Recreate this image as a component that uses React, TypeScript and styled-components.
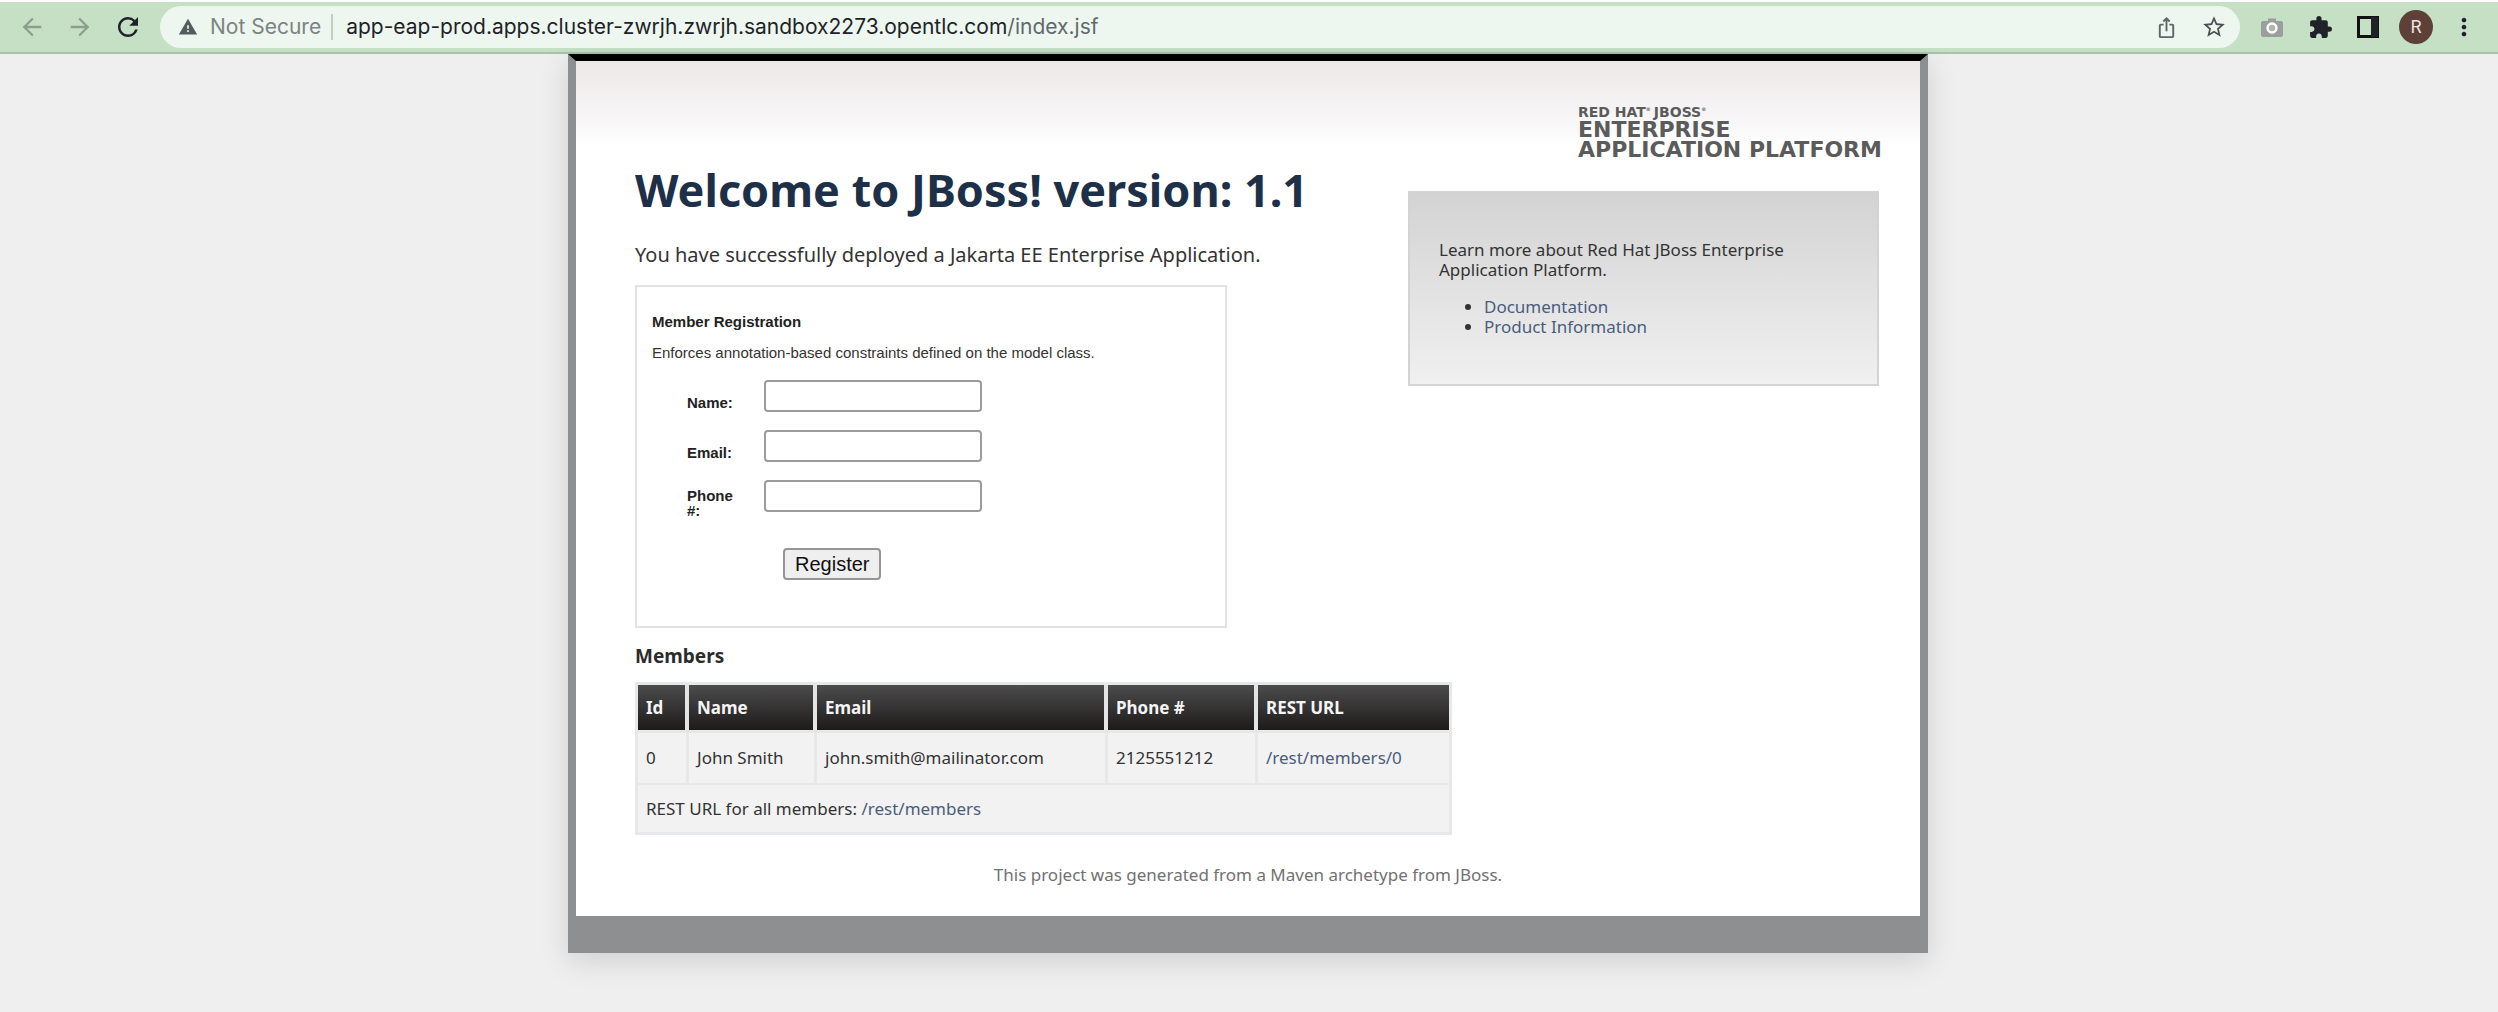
import React from 'react';
import styled, { createGlobalStyle } from 'styled-components';
import {
  MdArrowBack,
  MdArrowForward,
  MdExtension,
  MdIosShare,
  MdMoreVert,
  MdRefresh,
  MdStarBorder,
  MdWarning,
} from 'react-icons/md';

const pageFont = '"Noto Sans", "Open Sans", sans-serif';
const formFont = '"Liberation Sans", Arial, sans-serif';

const GlobalStyle = createGlobalStyle`
  * { box-sizing: border-box; }
  html { background: #efefef; }
  body { margin: 0; font-family: ${pageFont}; color: #333; }
  h1, h2, h3, p, ul { margin: 0; }
`;

/* ---------- browser toolbar ---------- */

const Toolbar = styled.header`
  display: flex;
  align-items: center;
  height: 54px;
  padding: 0 10px 0 8px;
  border-top: 2px solid #fdfefd;
  border-bottom: 2px solid #a9c3ab;
  background: #c6e0c6;
`;

const ToolGroup = styled.div`
  display: flex;
  align-items: center;
`;

const IconButton = styled.button<{ $tone: string }>`
  display: flex;
  justify-content: center;
  width: 48px;
  padding: 0;
  border: 0;
  background: none;
  color: ${({ $tone }) => $tone};
`;

const AddressBar = styled.div`
  flex: 1;
  display: flex;
  align-items: center;
  height: 42px;
  margin: 0 8px;
  padding: 0 2px 0 18px;
  border-radius: 21px;
  background: #edf7ef;
  font: 21px/28px Inter, Roboto, sans-serif;
  color: #1f2329;
`;

const Security = styled.span`
  display: flex;
  align-items: center;
  gap: 12px;
  padding-right: 10px;
  border-right: 2px solid #c3cdc5;
  margin-right: 13px;
  line-height: 26px;
  color: #7c8385;
`;

const Url = styled.span`
  flex: 1;
`;

const UrlPath = styled.span`
  color: #62696c;
`;

const Avatar = styled.button`
  width: 34px;
  height: 34px;
  margin: 0 7px;
  padding: 0;
  border: 0;
  border-radius: 50%;
  background: #5d4037;
  color: #eee3df;
  font: 18px/34px Roboto, sans-serif;
`;

const CameraIcon = () => (
  <svg width="22" height="20" viewBox="0 0 22 20" fill="#9a9e9c" aria-hidden="true">
    <path d="M2 4h5V1.500h8V4h5a2 2 0 0 1 2 2v12a2 2 0 0 1-2 2H2a2 2 0 0 1-2-2V6a2 2 0 0 1 2-2z" />
    <circle cx="11" cy="11" r="4.500" fill="#b1b4b2" stroke="#fff" strokeWidth="2.400" />
  </svg>
);

const PanelIcon = () => (
  <svg width="22" height="22" viewBox="0 0 22 22" aria-hidden="true">
    <path d="M1.500 1.500h19v19h-19z" fill="none" stroke="#111" strokeWidth="3" />
    <path d="M14 1h7v20h-7z" fill="#1f2329" />
  </svg>
);

/* ---------- page ---------- */

const Page = styled.main`
  padding: 0 2px 58px 0;
`;

const Container = styled.div`
  max-width: 1360px;
  margin: 0 auto;
  border: 8px solid #8d8f91;
  border-top: 7px solid #000;
  border-bottom-width: 37px;
  background: #fff linear-gradient(#ece8e7, #f6f4f5 50px, #fff 86px) no-repeat;
  box-shadow: 0 8px 28px rgba(0, 0, 0, 0.13);
`;

const Content = styled.div`
  padding: 43px 41px 29px 59px;
`;

const TopRow = styled.div`
  display: flex;
  justify-content: space-between;
  align-items: flex-start;
`;

const Intro = styled.section`
  padding-top: 56px;
`;

const Title = styled.h1`
  font-size: 45px;
  line-height: 60px;
  font-weight: 700;
  color: #1d3048;
`;

const Lead = styled.p`
  margin: 21px 0 16px;
  font-size: 20px;
  line-height: 28px;
`;

/* ---------- registration form ---------- */

const FormCard = styled.form`
  width: 592px;
  padding: 25px 15px 46px;
  border: 2px solid #e2e2e2;
  font: 15px/20px ${formFont};
`;

const FormTitle = styled.h2`
  font-size: 15px;
  line-height: 20px;
  color: #222;
`;

const FormNote = styled.p`
  margin: 11px 0 17px;
`;

const Fields = styled.div`
  display: grid;
  grid-template-columns: 50px 218px;
  grid-auto-rows: 32px;
  align-items: center;
  gap: 18px 27px;
  padding-left: 35px;
`;

const Label = styled.label`
  padding-top: 13px;
  font-weight: 700;
  line-height: 15px;
  color: #222;
`;

const TextInput = styled.input`
  width: 100%;
  height: 32px;
  padding: 2px 6px;
  border: 2px solid #9c9c9c;
  border-radius: 4px;
  background: #fff;
  font: 20px/24px ${formFont};
`;

const SubmitButton = styled.button`
  display: block;
  height: 32px;
  margin: 36px 0 0 131px;
  padding: 0 10px;
  border: 2px solid #969696;
  border-radius: 4px;
  background: #efefef;
  color: #111;
  font: 20px/24px ${formFont};
`;

/* ---------- side column ---------- */

const Side = styled.aside`
  display: flex;
  flex-direction: column;
  width: 471px;
`;

const Brand = styled.div`
  align-self: flex-end;
  width: 301px;
  font-family: "DejaVu Sans", sans-serif;
  font-size: 22px;
  line-height: 20px;
  font-weight: 700;
  color: #5b5b5b;
  white-space: nowrap;
`;

const BrandTop = styled.div`
  display: flex;
  gap: 3px;
  font-size: 14px;
  line-height: 16px;
`;

const Mark = styled.sup`
  font-size: 5px;
  line-height: 5px;
  vertical-align: 6px;
`;

const InfoCard = styled.section`
  margin-top: 31px;
  padding: 47px 29px;
  border: 2px solid #d3d3d3;
  background: linear-gradient(#d3d3d3, #f0f0f0);
  font-size: 17px;
  line-height: 20px;
`;

const InfoList = styled.ul`
  margin-top: 17px;
  padding-left: 45px;
`;

const Link = styled.a`
  color: #4a5d7c;
  text-decoration: none;
`;

/* ---------- members ---------- */

const SectionTitle = styled.h3`
  margin: 15px 0 13px;
  font-size: 19px;
  line-height: 26px;
  color: #2b2b2b;
`;

const MembersTable = styled.table`
  width: 817px;
  table-layout: fixed;
  border: 3px solid #e7e8e9;
  border-collapse: separate;
  border-spacing: 0;
  background: #f2f2f2;
  font-size: 17px;
  line-height: 24px;
`;

const HeadCell = styled.th<{ $width: number }>`
  width: ${({ $width }) => $width}px;
  height: 48px;
  padding: 0 8px;
  border-right: 4px solid #e3e4e6;
  border-bottom: 3px solid #e7e8e9;
  background: linear-gradient(#4c4c4c, #1e1a1a) padding-box;
  color: #f4f4f4;
  text-align: left;

  &:last-child { border-right: 0; }
`;

const Cell = styled.td`
  height: 52px;
  padding: 0 8px;
  border-right: 3px solid #e7e8e9;
  border-bottom: 2px solid #e7e8e9;

  &:last-child { border-right: 0; }
`;

const FootCell = styled.td`
  height: 47px;
  padding: 0 8px;
`;

const Credit = styled.p`
  margin-top: 28px;
  padding-right: 18px;
  text-align: center;
  font-size: 17px;
  line-height: 24px;
  color: #717171;
`;

const columns = [
  { title: 'Id', width: 51 },
  { title: 'Name', width: 128 },
  { title: 'Email', width: 291 },
  { title: 'Phone #', width: 150 },
  { title: 'REST URL', width: 191 },
];

const members = [
  { id: 0, name: 'John Smith', email: 'john.smith@mailinator.com', phone: '2125551212' },
];

const fields = [
  { id: 'name', label: 'Name:' },
  { id: 'email', label: 'Email:' },
  { id: 'phone', label: 'Phone #:' },
];

export default function App() {
  return (
    <>
      <GlobalStyle />
      <Toolbar>
        <ToolGroup>
          <IconButton $tone="#8aa08c" aria-label="Back"><MdArrowBack size={28} /></IconButton>
          <IconButton $tone="#8aa08c" aria-label="Forward"><MdArrowForward size={28} /></IconButton>
          <IconButton $tone="#1f2329" aria-label="Reload"><MdRefresh size={30} /></IconButton>
        </ToolGroup>
        <AddressBar>
          <Security><MdWarning size={20} color="#565c5e" />Not Secure</Security>
          <Url>app-eap-prod.apps.cluster-zwrjh.zwrjh.sandbox2273.opentlc.com<UrlPath>/index.jsf</UrlPath></Url>
          <ToolGroup>
            <IconButton $tone="#5f6668" aria-label="Share"><MdIosShare size={23} /></IconButton>
            <IconButton $tone="#4a5053" aria-label="Bookmark"><MdStarBorder size={26} /></IconButton>
          </ToolGroup>
        </AddressBar>
        <ToolGroup>
          <IconButton $tone="#9a9e9c" aria-label="Camera"><CameraIcon /></IconButton>
          <IconButton $tone="#1f2329" aria-label="Extensions"><MdExtension size={25} /></IconButton>
          <IconButton $tone="#1f2329" aria-label="Side panel"><PanelIcon /></IconButton>
          <Avatar aria-label="Profile">R</Avatar>
          <IconButton $tone="#1f2329" aria-label="Menu"><MdMoreVert size={28} /></IconButton>
        </ToolGroup>
      </Toolbar>
      <Page>
        <Container>
          <Content>
            <TopRow>
              <Intro>
                <Title>Welcome to JBoss! version: 1.1</Title>
                <Lead>You have successfully deployed a Jakarta EE Enterprise Application.</Lead>
                <FormCard onSubmit={(e) => e.preventDefault()}>
                  <FormTitle>Member Registration</FormTitle>
                  <FormNote>Enforces annotation-based constraints defined on the model class.</FormNote>
                  <Fields>
                    {fields.map((f) => (
                      <React.Fragment key={f.id}>
                        <Label htmlFor={f.id}>{f.label}</Label>
                        <TextInput id={f.id} name={f.id} type="text" />
                      </React.Fragment>
                    ))}
                  </Fields>
                  <SubmitButton type="submit">Register</SubmitButton>
                </FormCard>
              </Intro>
              <Side>
                <Brand>
                  <BrandTop>
                    <span>RED HAT<Mark>®</Mark></span>
                    <span>JBOSS<Mark>®</Mark></span>
                  </BrandTop>
                  <div>ENTERPRISE</div>
                  <div>APPLICATION PLATFORM</div>
                </Brand>
                <InfoCard>
                  <p>Learn more about Red Hat JBoss Enterprise Application Platform.</p>
                  <InfoList>
                    <li><Link href="#documentation">Documentation</Link></li>
                    <li><Link href="#product">Product Information</Link></li>
                  </InfoList>
                </InfoCard>
              </Side>
            </TopRow>
            <SectionTitle>Members</SectionTitle>
            <MembersTable>
              <thead>
                <tr>
                  {columns.map((c) => (
                    <HeadCell key={c.title} $width={c.width} scope="col">{c.title}</HeadCell>
                  ))}
                </tr>
              </thead>
              <tbody>
                {members.map((m) => (
                  <tr key={m.id}>
                    <Cell>{m.id}</Cell>
                    <Cell>{m.name}</Cell>
                    <Cell>{m.email}</Cell>
                    <Cell>{m.phone}</Cell>
                    <Cell><Link href={`#/rest/members/${m.id}`}>/rest/members/{m.id}</Link></Cell>
                  </tr>
                ))}
              </tbody>
              <tfoot>
                <tr>
                  <FootCell colSpan={5}>
                    REST URL for all members: <Link href="#/rest/members">/rest/members</Link>
                  </FootCell>
                </tr>
              </tfoot>
            </MembersTable>
            <Credit>This project was generated from a Maven archetype from JBoss.</Credit>
          </Content>
        </Container>
      </Page>
    </>
  );
}
